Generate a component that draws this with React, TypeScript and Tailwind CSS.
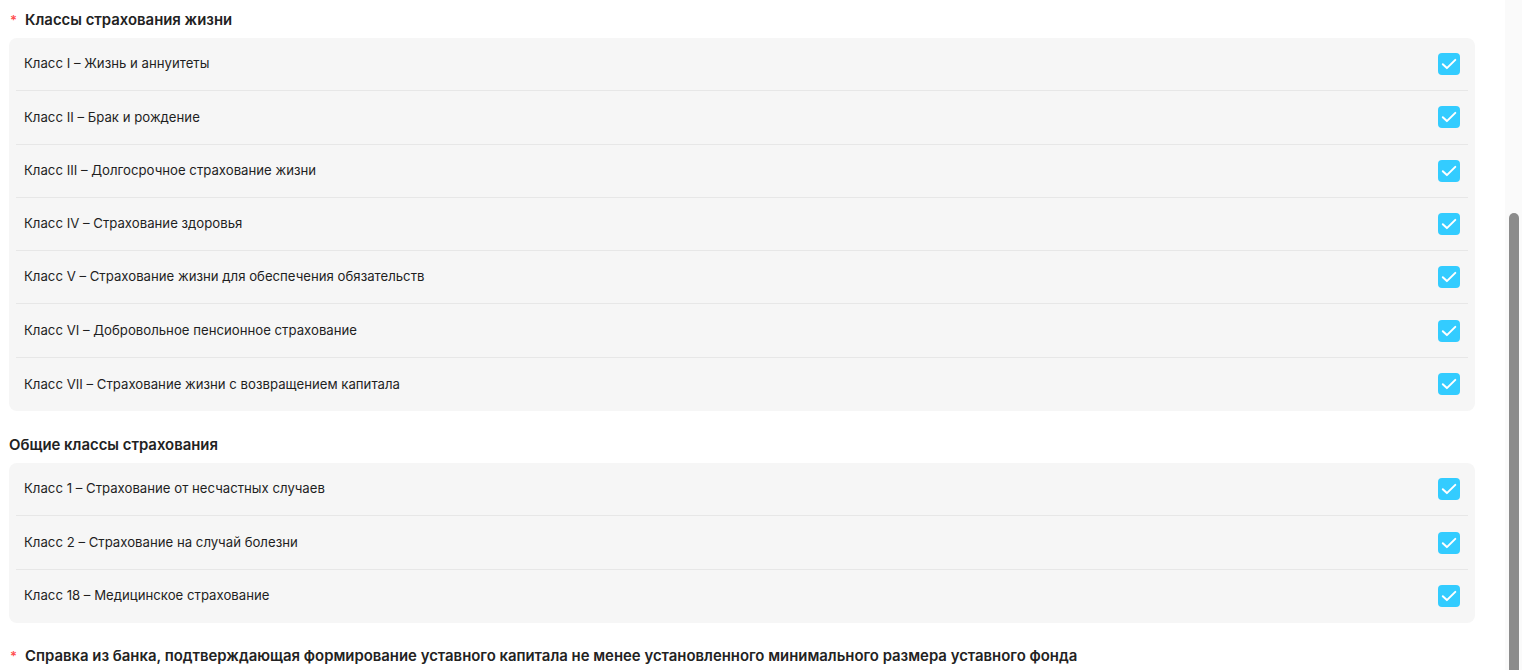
const lifeClasses = [
	"Класс I – Жизнь и аннуитеты",
	"Класс II – Брак и рождение",
	"Класс III – Долгосрочное страхование жизни",
	"Класс IV – Страхование здоровья",
	"Класс V – Страхование жизни для обеспечения обязательств",
	"Класс VI – Добровольное пенсионное страхование",
	"Класс VII – Страхование жизни с возвращением капитала",
];

const generalClasses = [
	"Класс 1 – Страхование от несчастных случаев",
	"Класс 2 – Страхование на случай болезни",
	"Класс 18 – Медицинское страхование",
];

const CheckBox = () => (
	<span className="flex h-[22px] w-[22px] items-center justify-center rounded-[4px] bg-[#33ccff]">
		<svg width="18" height="18" viewBox="0 0 18 18" fill="none">
			<path
				d="M2.8 9.3 6.9 13.1 15.3 4.9"
				stroke="white"
				strokeWidth="2"
				strokeLinecap="round"
				strokeLinejoin="round"
			/>
		</svg>
	</span>
);

const ClassList = ({ items }: { items: string[] }) => (
	<div className="rounded-lg bg-[#f6f6f6] px-[7px]">
		{items.map((item, i) => (
			<div
				key={item}
				className={`flex h-[53.3px] items-center justify-between px-2 ${
					i < items.length - 1 ? "border-b border-[#e7e7e7]" : ""
				}`}
			>
				<span className="text-[13.2px] text-[#1f1f1f]">{item}</span>
				<CheckBox />
			</div>
		))}
	</div>
);

const Heading = ({
	children,
	required,
}: {
	children: React.ReactNode;
	required?: boolean;
}) => (
	<div className="flex h-5 items-center text-[14.9px] font-semibold leading-5 text-[#222]">
		{required && <span className="mr-[8px] pl-px text-[13px] text-[#ff4d4f]">*</span>}
		{children}
	</div>
);

const App = () => {
	return (
		<div
			className="flex h-[670px] w-full overflow-hidden bg-white"
			style={{ fontFamily: "Inter, 'Noto Sans', sans-serif" }}
		>
			<div className="flex-1 pl-[9px] pr-[30px] pt-[10px]">
				<Heading required>Классы страхования жизни</Heading>
				<div className="mt-2">
					<ClassList items={lifeClasses} />
				</div>

				<div className="mt-6">
					<Heading>Общие классы страхования</Heading>
				</div>
				<div className="mt-2">
					<ClassList items={generalClasses} />
				</div>

				<div className="mt-[23px]">
					<Heading required>
						Справка из банка, подтверждающая формирование уставного капитала не
						менее установленного минимального размера уставного фонда
					</Heading>
				</div>
			</div>

			{/* scrollbar */}
			<div className="flex w-[17px] shrink-0 justify-center bg-[#fafafa] pt-[213px]">
				<div className="h-full w-[10px] rounded-t-full bg-[#8c8c8c]" />
			</div>
		</div>
	);
};

export default App;
